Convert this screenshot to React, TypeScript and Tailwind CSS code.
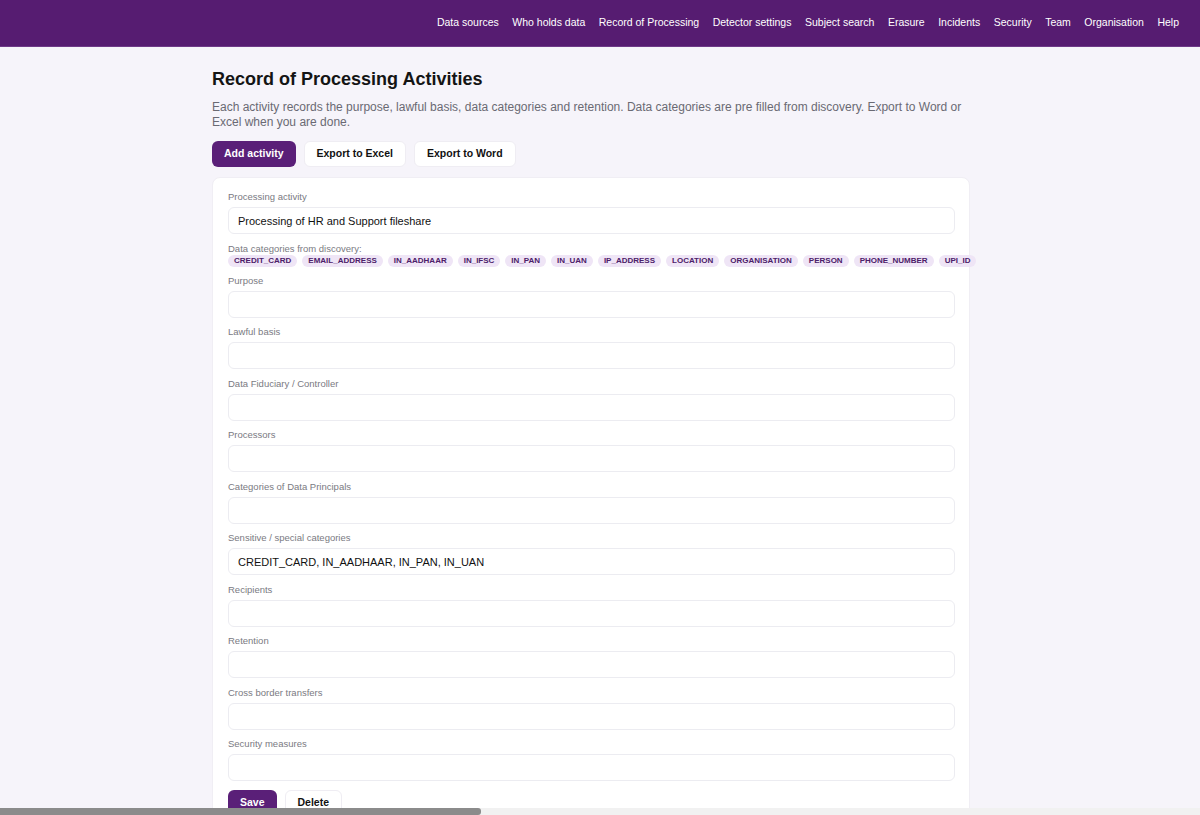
import React from "react"

const navItems = [
  "Data sources",
  "Who holds data",
  "Record of Processing",
  "Detector settings",
  "Subject search",
  "Erasure",
  "Incidents",
  "Security",
  "Team",
  "Organisation",
  "Help",
]

const categories = [
  "CREDIT_CARD",
  "EMAIL_ADDRESS",
  "IN_AADHAAR",
  "IN_IFSC",
  "IN_PAN",
  "IN_UAN",
  "IP_ADDRESS",
  "LOCATION",
  "ORGANISATION",
  "PERSON",
  "PHONE_NUMBER",
  "UPI_ID",
]

const fields: { label: string; value?: string }[] = [
  { label: "Purpose" },
  { label: "Lawful basis" },
  { label: "Data Fiduciary / Controller" },
  { label: "Processors" },
  { label: "Categories of Data Principals" },
  { label: "Sensitive / special categories", value: "CREDIT_CARD, IN_AADHAAR, IN_PAN, IN_UAN" },
  { label: "Recipients" },
  { label: "Retention" },
  { label: "Cross border transfers" },
  { label: "Security measures" },
]

function Field({ label, value }: { label: string; value?: string }) {
  return (
    <div className="mb-[8.5px]">
      <div className="h-[12px] leading-[12px] text-[9.5px] text-[#7a7a82] mb-[4px]">{label}</div>
      <input
        readOnly
        value={value ?? ""}
        className="block w-full h-[27px] rounded-md border border-[#ececf1] bg-white px-[9px] text-[11px] text-[#111] outline-none"
      />
    </div>
  )
}

export default function App() {
  return (
    <div className="min-h-[815px] bg-[#f6f4fa] font-['Liberation_Sans',Arial,sans-serif] overflow-hidden">
      {/* Top nav */}
      <header className="h-[47px] bg-[#561c71] border-b border-[#6e3a88] flex items-center justify-end pr-[21px]">
        <nav className="flex items-center gap-[13.5px]">
          {navItems.map((item) => (
            <span key={item} className="text-[10.5px] text-white whitespace-nowrap">
              {item}
            </span>
          ))}
        </nav>
      </header>

      <main className="ml-[212px] w-[758px] pt-[20px]">
        <h1 className="text-[18px] font-bold text-[#141414] leading-[24px]">Record of Processing Activities</h1>
        <p className="mt-[9px] text-[12px] leading-[15px] text-[#6a6a73]">
          Each activity records the purpose, lawful basis, data categories and retention. Data categories are pre filled
          from discovery. Export to Word or Excel when you are done.
        </p>

        <div className="mt-[11px] flex gap-[8px]">
          <button className="h-[26px] px-[12px] rounded-md bg-[#5a1f78] text-white text-[10.5px] font-bold">
            Add activity
          </button>
          <button className="h-[26px] px-[12px] rounded-md bg-white border border-[#efedf3] text-[#111] text-[10.5px] font-bold">
            Export to Excel
          </button>
          <button className="h-[26px] px-[12px] rounded-md bg-white border border-[#efedf3] text-[#111] text-[10.5px] font-bold">
            Export to Word
          </button>
        </div>

        {/* Activity card */}
        <section className="mt-[10px] bg-white rounded-lg border border-[#f0eef4] pl-[15px] pr-[14px] pt-[13px] pb-[16px]">
          <Field label="Processing activity" value="Processing of HR and Support fileshare" />

          <div className="mt-[1px] h-[12px] leading-[12px] text-[9.5px] text-[#7a7a82]">
            Data categories from discovery:
          </div>
          <div className="flex gap-[5px] whitespace-nowrap mb-[8px]">
            {categories.map((c) => (
              <span
                key={c}
                className="shrink-0 h-[12px] leading-[12px] px-[6px] rounded-full bg-[#efe5f6] text-[#4c2069] text-[8px] font-bold"
              >
                {c}
              </span>
            ))}
          </div>

          {fields.map((f) => (
            <Field key={f.label} label={f.label} value={f.value} />
          ))}

          <div className="flex gap-[8px] mt-[1px]">
            <button className="h-[26px] px-[12px] rounded-md bg-[#5a1f78] text-white text-[10.5px] font-bold">Save</button>
            <button className="h-[26px] px-[12px] rounded-md bg-white border border-[#efedf3] text-[#111] text-[10.5px] font-bold">
              Delete
            </button>
          </div>
        </section>
      </main>

      {/* Horizontal scrollbar */}
      <div className="fixed left-0 right-0 bottom-0 h-[7px] bg-[#f1f1f1]">
        <div className="h-full w-[481px] rounded-r-[3px] bg-[#8b8b8b]" />
      </div>
    </div>
  )
}
